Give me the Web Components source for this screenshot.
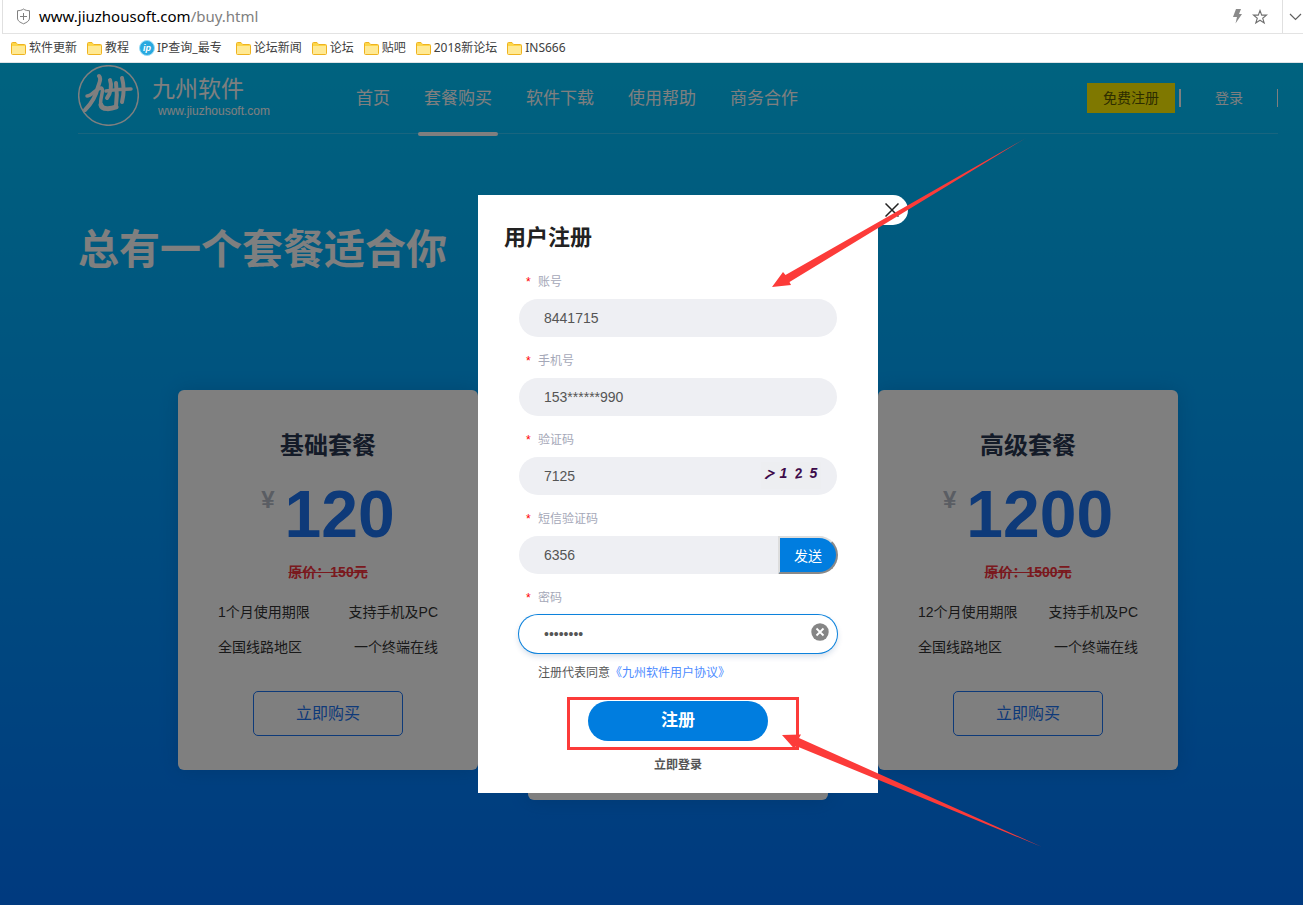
<!DOCTYPE html>
<html lang="zh-CN">
  <head>
    <meta charset="UTF-8" />
    <meta name="viewport" content="width=device-width, initial-scale=1.0" />
    <title>九州软件</title>
    <style>
      body {
        margin: 0;
        min-height: 100vh;
        display: flex;
        flex-direction: column;
        position: relative;
        font-family: "Liberation Sans", "Noto Sans CJK SC", sans-serif;
        font-size: 14px;
      }
      a {
        color: inherit;
        text-decoration: none;
      }
    </style>
  </head>
  <body>
    <browser-bar>
      <book-mark>软件更新</book-mark>
      <book-mark>教程</book-mark>
      <book-mark icon="ip">IP查询_最专</book-mark>
      <book-mark>论坛新闻</book-mark>
      <book-mark>论坛</book-mark>
      <book-mark>贴吧</book-mark>
      <book-mark>2018新论坛</book-mark>
      <book-mark>INS666</book-mark>
    </browser-bar>

    <buy-page>
      <site-header slot="header"></site-header>
      <span slot="title">总有一个套餐适合你</span>
      <price-card price="120" old="150" period="1个月使用期限">基础套餐</price-card>
      <price-card featured></price-card>
      <price-card price="1200" old="1500" period="12个月使用期限">高级套餐</price-card>

      <register-dialog slot="dialog">
        <form-field label="账号" value="8441715"></form-field>
        <form-field label="手机号" value="153******990"></form-field>
        <form-field label="验证码" value="7125"><captcha-code slot="extra"></captcha-code></form-field>
        <form-field label="短信验证码" value="6356"><send-button slot="extra">发送</send-button></form-field>
        <form-field label="密码" value="12345678" type="password" active><clear-button slot="extra"></clear-button></form-field>
      </register-dialog>
    </buy-page>

    <arrow-marks></arrow-marks>
  </body>
  <script>
    function define(name, render) {
      customElements.define(
        name,
        class extends HTMLElement {
          connectedCallback() {
            if (this.shadowRoot) return;
            this.attachShadow({ mode: "open" }).innerHTML = render(this);
          }
        }
      );
    }

    // ---- browser chrome ----
    define("browser-bar", () => `
      <style>
        :host {
          display: block;
          background: #fff;
          font-family: "Noto Sans", "Noto Sans CJK SC", sans-serif;
        }
        .address {
          display: flex;
          align-items: center;
          height: 33px;
          margin-left: 2px;
          border-left: 1px solid #e0e0e0;
          border-bottom: 1px solid #e3e3e3;
        }
        .shield { margin: 0 8px 0 13px; }
        .url { flex: 1; font-size: 15px; line-height: 22px; margin-bottom: 2px; color: #808080; }
        .url b { font-weight: normal; color: #000; }
        .tools { display: flex; align-items: center; gap: 10px; padding-right: 14px; }
        .more {
          display: flex;
          align-items: center;
          height: 33px;
          width: 21px;
          box-sizing: border-box;
          padding-left: 6px;
          border-left: 1px solid #e0e0e0;
          overflow: hidden;
        }
        svg { display: block; flex: none; }
        .bookmarks {
          display: flex;
          align-items: center;
          gap: 10px;
          height: 28px;
          padding-left: 11px;
          border-bottom: 1px solid #dfe3e6;
        }
      </style>
      <div class="address">
        <svg class="shield" width="15" height="17" viewBox="0 0 15 17" fill="none" stroke="#808080">
          <path d="M7.500 1 C6 2.300 3.500 2.700 1.500 2.700 V10 C1.500 13 4 14.300 7.500 15.800 C11 14.300 13.500 13 13.500 10 V2.700 C11.500 2.700 9 2.300 7.500 1 Z M4 8.500 H11 M7.500 5 V12" />
        </svg>
        <div class="url"><b>www.jiuzhousoft.com</b>/buy.html</div>
        <div class="tools">
          <svg width="9" height="15" viewBox="0 0 9 15" fill="#8a8a8a"><path d="M3 0 H8 L6 5 H9 L2.500 14.500 L4 8 H0 Z" /></svg>
          <svg width="16" height="16" viewBox="0 0 16 16" fill="none" stroke="#707070" stroke-width="1.100"><path d="M8 1.500 L9.700 6.100 H14.500 L10.700 9.200 L12.200 14 L8 11.200 L3.800 14 L5.300 9.200 L1.500 6.100 H6.300 Z" /></svg>
        </div>
        <div class="more"><svg width="13" height="8" viewBox="0 0 13 8" fill="none" stroke="#606060" stroke-width="1.200"><path d="M1 1 L6.500 6.500 L12 1" /></svg></div>
      </div>
      <div class="bookmarks"><slot></slot></div>
    `);

    const folderIcon = `
      <svg width="15" height="13" viewBox="0 0 15 13">
        <path d="M0.500 1.500 Q0.500 0.500 1.500 0.500 H5 L6.500 2.500 H13.500 Q14.500 2.500 14.500 3.500 V11.500 Q14.500 12.500 13.500 12.500 H1.500 Q0.500 12.500 0.500 11.500 Z" fill="#ffe993" stroke="#efb320" />
        <path d="M1 1 H5 L6.500 3 H14 V4 H1 Z" fill="#fdd648" />
      </svg>`;
    const ipIcon = `
      <svg width="16" height="16" viewBox="0 0 16 16">
        <circle cx="8" cy="8" r="7.500" fill="#28a9e0" stroke="#9bdcf5" />
        <text x="4" y="11" font-family="Liberation Sans" font-size="9" font-weight="bold" font-style="italic" fill="#fff">ip</text>
      </svg>`;

    define("book-mark", (el) => `
      <style>
        :host { display: flex; align-items: center; gap: 3px; }
        :host([icon]) { gap: 2px; margin-right: 4px; }
        a { color: #404040; text-decoration: none; font-size: 12px; line-height: 18px; white-space: nowrap; }
        svg { display: block; flex: none; }
      </style>
      ${el.getAttribute("icon") ? ipIcon : folderIcon}
      <a href="#"><slot></slot></a>
    `);

    // ---- page ----
    define("buy-page", () => `
      <style>
        :host {
          --page-inset: 0 25px 0 78px;
          display: block;
          flex: 1;
          position: relative;
          background: linear-gradient(#00c6ff, #0074ff);
        }
        main { padding: var(--page-inset); }
        h1 {
          margin: 86px 0 0;
          font-size: 41px;
          line-height: 60px;
          color: #fff;
        }
        .cards {
          display: flex;
          justify-content: center;
          align-items: flex-start;
          gap: 50px;
          margin-top: 110px;
        }
        .mask {
          position: absolute;
          inset: 0;
          box-sizing: border-box;
          padding: var(--page-inset);
          background: rgba(0, 0, 0, 0.5);
          display: flex;
          justify-content: center;
          align-items: flex-start;
        }
        ::slotted(register-dialog) { margin-top: 132px; }
      </style>
      <main>
        <slot name="header"></slot>
        <h1><slot name="title"></slot></h1>
        <div class="cards"><slot></slot></div>
      </main>
      <div class="mask"><slot name="dialog"></slot></div>
    `);

    define("site-header", () => `
      <style>
        :host {
          display: flex;
          align-items: center;
          height: 70px;
          color: #fff;
          border-bottom: 1px solid rgba(255, 255, 255, 0.2);
        }
        a { color: inherit; text-decoration: none; white-space: nowrap; }
        .logo { display: flex; align-items: center; gap: 13px; align-self: flex-start; margin-top: 2px; }
        .logo svg { display: block; }
        .name { font-size: 23px; line-height: 30px; }
        .site { font-size: 12px; line-height: 14px; padding-left: 6px; }
        nav { display: flex; gap: 34px; margin-left: 86px; font-size: 17px; line-height: 70px; }
        nav a { position: relative; padding-top: 2px; }
        nav a.on::after {
          content: "";
          position: absolute;
          left: -6px;
          right: -6px;
          bottom: -2px;
          height: 4px;
          border-radius: 2px;
          background: #fff;
        }
        .user { display: flex; align-items: center; margin-left: auto; line-height: 30px; }
        .reg { padding: 0 16px; background: #fff000; color: #5a5a00; }
        .login { padding: 0 34px; margin-left: 4px; border-left: 2px solid #fff; border-right: 1px solid #fff; line-height: 18px; }
      </style>
      <a class="logo" href="#">
        <svg width="61" height="61" viewBox="0 0 61 61" fill="none" stroke="#fff" stroke-linecap="round" stroke-linejoin="round">
          <circle cx="30.500" cy="30.500" r="29.800" stroke-width="1.500" />
          <path d="M21 11 C24 14 21 18 20 22 C18 31 13 39 7 45" stroke-width="4" />
          <path d="M9 31 C14 31 17 24 23 23 C27 24 21 35 23 40" stroke-width="3.500" />
          <path d="M23 40 C24 45 33 44 38 42" stroke-width="5" />
          <path d="M32 15 C34 20 33 28 29 33" stroke-width="4" />
          <path d="M38 18 C39 25 39 34 38 41" stroke-width="4" />
          <path d="M44 13 C46 20 46 29 44 37" stroke-width="4" />
          <path d="M28 26 C35 25 45 24 53 24" stroke-width="3.500" />
        </svg>
        <span>
          <div class="name">九州软件</div>
          <div class="site">www.jiuzhousoft.com</div>
        </span>
      </a>
      <nav>
        <a href="#">首页</a>
        <a href="#" class="on">套餐购买</a>
        <a href="#">软件下载</a>
        <a href="#">使用帮助</a>
        <a href="#">商务合作</a>
      </nav>
      <div class="user">
        <a class="reg" href="#">免费注册</a>
        <a class="login" href="#">登录</a>
      </div>
    `);

    define("price-card", (el) => `
      <style>
        :host {
          display: block;
          flex: 0 1 300px;
          box-sizing: border-box;
          min-height: 380px;
          padding: 38px 40px 34px;
          border-radius: 6px;
          background: #fff;
          box-shadow: 0 0 20px rgba(0, 60, 120, 0.2);
          color: #333;
        }
        :host([featured]) { min-height: 440px; margin-top: -30px; }
        h2 { margin: 0; font-size: 24px; line-height: 36px; text-align: center; color: #283650; }
        .price { display: flex; justify-content: center; gap: 10px; margin-top: 10px; font-weight: bold; }
        .yen { font-size: 24px; line-height: 52px; color: #b4bac6; }
        .num { font-size: 66px; line-height: 80px; color: #1c74f2; }
        del { display: block; margin-top: 8px; font-weight: bold; line-height: 20px; text-align: center; color: #f5323c; }
        ul {
          display: grid;
          grid-template-columns: auto auto;
          justify-content: space-between;
          row-gap: 15px;
          margin: 20px 0 0;
          padding: 0;
          list-style: none;
          line-height: 20px;
        }
        li:nth-child(even) { text-align: right; }
        button {
          display: block;
          width: 150px;
          height: 45px;
          margin: 34px auto 0;
          padding: 0 0 4px;
          border: 1px solid #1c74f2;
          border-radius: 5px;
          background: none;
          color: #1c74f2;
          font: inherit;
          font-size: 16px;
        }
      </style>
      ${el.hasAttribute("featured") ? "" : `
        <h2><slot></slot></h2>
        <div class="price"><span class="yen">¥</span><span class="num">${el.getAttribute("price")}</span></div>
        <del>原价：${el.getAttribute("old")}元</del>
        <ul>
          <li>${el.getAttribute("period")}</li>
          <li>支持手机及PC</li>
          <li>全国线路地区</li>
          <li>一个终端在线</li>
        </ul>
        <button type="button">立即购买</button>
      `}
    `);

    // ---- register dialog ----
    define("register-dialog", () => `
      <style>
        :host {
          display: block;
          position: relative;
          box-sizing: border-box;
          width: 400px;
          padding: 28px 41px 19px;
          background: #fff;
          color: #555;
          font-size: 12px;
          line-height: 18px;
        }
        .close {
          position: absolute;
          left: 100%;
          top: 0;
          width: 30px;
          height: 30px;
          padding: 0 0 0 7px;
          border: 0;
          border-radius: 0 15px 15px 0;
          background: #fff;
        }
        .close svg { display: block; }
        h2 { margin: 0 -15px 20px; font-size: 22px; line-height: 30px; color: #222; }
        .fields { display: grid; gap: 14px; }
        .agree { margin: 11px 0 19px 19px; }
        .agree a { color: #4d8bff; text-decoration: none; }
        .submit {
          display: block;
          width: 180px;
          height: 40px;
          margin: 0 auto 15px;
          border: 0;
          border-radius: 20px;
          background: #007ddf;
          color: #fff;
          font: inherit;
          font-size: 17px;
          font-weight: bold;
        }
        .login { display: block; text-align: center; font-weight: bold; color: inherit; text-decoration: none; }
      </style>
      <button class="close" type="button" aria-label="关闭">
        <svg width="14" height="14" viewBox="0 0 14 14" stroke="#222" stroke-width="1.500"><path d="M0.500 0.500 L13.500 13.500 M13.500 0.500 L0.500 13.500" /></svg>
      </button>
      <h2>用户注册</h2>
      <div class="fields"><slot></slot></div>
      <div class="agree">注册代表同意<a href="#">《九州软件用户协议》</a></div>
      <button class="submit" type="button">注册</button>
      <a class="login" href="#">立即登录</a>
    `);

    define("form-field", (el) => `
      <style>
        :host { display: block; }
        label { display: flex; gap: 7px; margin: 0 0 8px 7px; color: #a5a8b8; }
        i { width: 5px; font-style: normal; color: #f00; }
        .box { display: flex; position: relative; margin-bottom: 1px; }
        input {
          flex: 1;
          min-width: 0;
          height: 38px;
          box-sizing: border-box;
          padding: 0 25px;
          border: 0;
          border-radius: 19px;
          outline: none;
          background: #eeeff3;
          color: #555;
          font: inherit;
          font-size: 14px;
        }
        :host([active]) .box { margin-bottom: 0; }
        :host([active]) input {
          background: #fff;
          box-shadow: 0 0 0 1px #0c82dc, 0 3px 6px rgba(0, 60, 130, 0.2);
        }
      </style>
      <label for="field"><i>*</i>${el.getAttribute("label")}</label>
      <div class="box">
        <input id="field" type="${el.getAttribute("type") || "text"}" value="${el.getAttribute("value")}" />
        <slot name="extra"></slot>
      </div>
    `);

    define("captcha-code", () => `
      <style>
        :host {
          position: absolute;
          right: 16px;
          top: 5px;
          display: flex;
          justify-content: space-around;
          width: 60px;
          height: 27px;
          background: #edeef1;
          color: #3d0a4a;
          font-size: 14px;
          font-weight: bold;
          font-style: italic;
          line-height: 22px;
        }
        span:nth-child(1) { transform: rotate(60deg); line-height: 27px; }
        span:nth-child(2) { transform: rotate(25deg); line-height: 26px; }
        span:nth-child(4) { transform: rotate(-10deg); }
      </style>
      <span>7</span><span>1</span><span>2</span><span>5</span>
    `);

    define("send-button", () => `
      <style>
        :host { position: absolute; right: -1px; top: 0; bottom: 0; display: flex; }
        button {
          width: 60px;
          padding: 2px 0 0;
          border: 2px outset #ddd;
          border-radius: 0 19px 19px 0;
          background: #007ddf;
          color: #fff;
          font: inherit;
          font-size: 14px;
        }
      </style>
      <button type="button"><slot></slot></button>
    `);

    define("clear-button", () => `
      <style>
        :host { position: absolute; right: 8px; top: 8px; }
        button { display: block; padding: 0; border: 0; background: none; }
        svg { display: block; }
      </style>
      <button type="button" aria-label="清除">
        <svg width="18" height="18" viewBox="0 0 18 18"><circle cx="9" cy="9" r="8.700" fill="#858585" /><path d="M5.500 5.500 L12.500 12.500 M12.500 5.500 L5.500 12.500" stroke="#fff" stroke-width="1.800" /></svg>
      </button>
    `);

    // red arrows and frame drawn over everything
    define("arrow-marks", () => `
      <style>
        :host { position: absolute; left: 0; top: 0; pointer-events: none; }
        svg { display: block; }
      </style>
      <svg width="1100" height="860" viewBox="0 0 1100 860" fill="#fc3b39">
        <polygon points="772,287 783,272 785.500,275 1026,138 789.500,282 791,285" />
        <polygon points="782,735 801,734.500 799,738 1042,847 796,746 794.500,749" />
        <rect x="568.500" y="698.500" width="229" height="50" fill="none" stroke="#fc3b39" stroke-width="3" />
      </svg>
    `);
  </script>
</html>
